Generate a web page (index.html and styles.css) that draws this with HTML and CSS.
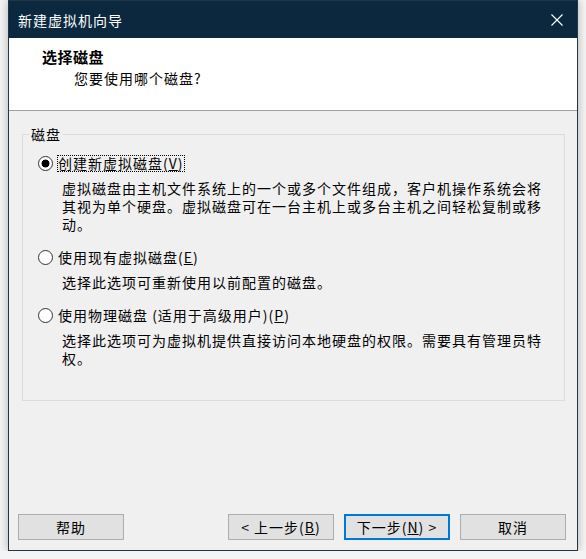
FILE: index.html
```html
<!DOCTYPE html>
<html lang="zh-CN">
<head>
<meta charset="utf-8">
<title>新建虚拟机向导</title>
<link rel="stylesheet" href="styles.css">
</head>
<body>
<div class="window">
  <div class="titlebar">
    <span class="title">新建虚拟机向导</span>
    <svg class="close" width="12" height="12" viewBox="0 0 12 12"><path d="M0.5 0.5 L11.5 11.5 M11.5 0.5 L0.5 11.5" stroke="#fff" stroke-width="1.1" fill="none"/></svg>
  </div>
  <div class="header">
    <div class="h-title">选择磁盘</div>
    <div class="h-sub">您要使用哪个磁盘?</div>
  </div>
  <div class="body">
    <fieldset class="group">
      <legend>磁盘</legend>
      <div class="option">
        <div class="opt-row"><span class="radio checked"></span><span class="label focus">创建新虚拟磁盘(<u>V</u>)</span></div>
        <p class="desc">虚拟磁盘由主机文件系统上的一个或多个文件组成，客户机操作系统会将<br>其视为单个硬盘。虚拟磁盘可在一台主机上或多台主机之间轻松复制或移<br>动。</p>
      </div>
      <div class="option">
        <div class="opt-row"><span class="radio"></span><span class="label">使用现有虚拟磁盘(<u>E</u>)</span></div>
        <p class="desc">选择此选项可重新使用以前配置的磁盘。</p>
      </div>
      <div class="option">
        <div class="opt-row"><span class="radio"></span><span class="label">使用物理磁盘 (适用于高级用户)(<u>P</u>)</span></div>
        <p class="desc">选择此选项可为虚拟机提供直接访问本地硬盘的权限。需要具有管理员特<br>权。</p>
      </div>
    </fieldset>
    <div class="buttons">
      <button class="btn">帮助</button>
      <span class="spacer"></span>
      <button class="btn">&lt; 上一步(<u>B</u>)</button>
      <button class="btn primary">下一步(<u>N</u>) &gt;</button>
      <button class="btn">取消</button>
    </div>
  </div>
</div>
</body>
</html>
```
FILE: styles.css
```css
html, body {
  margin: 0;
  padding: 0;
  background: #f4f4f4;
}
body {
  font-family: "Noto Sans CJK SC", "Noto Sans", sans-serif;
  font-size: 14px;
  letter-spacing: 1px;
  color: #000;
}
.window {
  margin-left: 8px;
  width: 568px;
  height: 549px;
  border: 1px solid #22364a;
  background: #f0f0f0;
  display: flex;
  flex-direction: column;
  box-shadow: 0 0 9px rgba(0, 0, 0, 0.28);
}
.titlebar {
  height: 37px;
  background: #0b283f;
  display: flex;
  align-items: center;
  padding-left: 9px;
  flex-shrink: 0;
}
.title {
  color: #fff;
  line-height: 18px;
}
.close {
  margin-left: auto;
  margin-right: 14px;
  display: block;
}
.header {
  height: 72px;
  background: #fff;
  border-bottom: 1px solid #a0a0a0;
  box-sizing: content-box;
  padding-left: 33px;
  flex-shrink: 0;
}
.h-title {
  font-weight: 700;
  font-size: 15px;
  letter-spacing: 0.5px;
  line-height: 18px;
  margin-top: 10px;
}
.h-sub {
  line-height: 18px;
  margin-top: 3px;
  padding-left: 32px;
}
.body {
  flex: 1;
  display: flex;
  flex-direction: column;
}
.group {
  margin: 14px 12px 0 13px;
  height: 263px;
  border: 1px solid #dcdcdc;
  padding: 11px 0 0 0;
  box-sizing: content-box;
  min-width: 0;
}
.group legend {
  margin-left: 6px;
  padding: 0 2px;
  line-height: 18px;
}
.option {
  margin: 0 0 15px 15px;
}
.opt-row {
  display: flex;
  align-items: center;
  height: 18px;
}
.radio {
  width: 13px;
  height: 13px;
  border: 1px solid #333;
  border-radius: 50%;
  background: #fff;
  flex-shrink: 0;
  margin-right: 4px;
}
.radio.checked {
  background: radial-gradient(circle, #000 0 3.6px, #fff 4.3px);
}
.label {
  display: inline-block;
  line-height: 15px;
  border: 1px dotted transparent;
  padding: 0;
  white-space: nowrap;
}
.label.focus {
  border-color: #000;
}
.desc {
  margin: 7px 0 0 24px;
  line-height: 18px;
  white-space: nowrap;
}
.buttons {
  margin-top: auto;
  display: flex;
  padding: 0 11px 10px 9px;
}
.spacer {
  flex: 1;
}
.btn {
  width: 106px;
  height: 26px;
  background: #e1e1e1;
  border: 1px solid #adadad;
  font-family: inherit;
  font-size: 14px;
  letter-spacing: 1px;
  line-height: 18px;
  color: #000;
  padding: 0;
  margin: 0 0 0 10px;
  box-sizing: border-box;
}
.btn:first-child {
  margin-left: 0;
}
.btn.primary {
  border: 2px solid #0078d7;
}
```
